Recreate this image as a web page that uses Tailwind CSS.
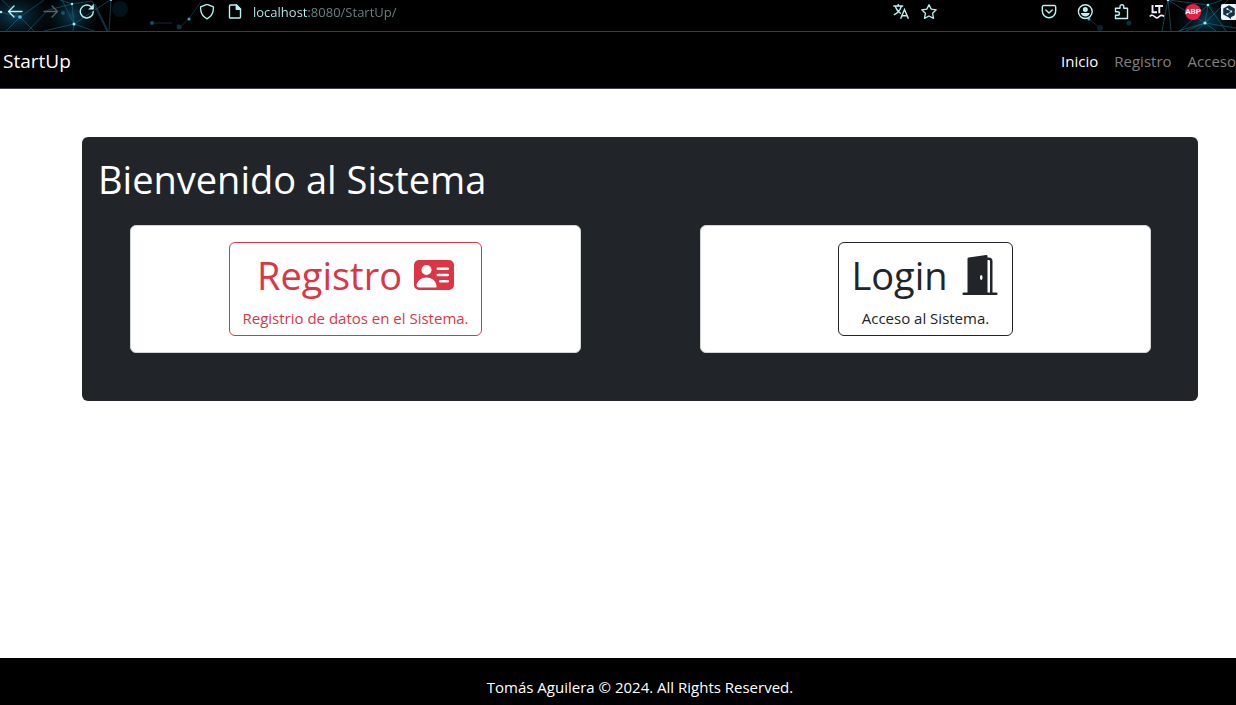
<!DOCTYPE html>
<html lang="es">
<head>
<meta charset="utf-8">
<title>StartUp</title>
<script src="https://cdn.jsdelivr.net/npm/@tailwindcss/browser@4"></script>
</head>
<body class="flex min-h-screen flex-col overflow-x-hidden bg-white text-[15px] leading-6 text-[#212529] font-['Open_Sans','Noto_Sans',sans-serif]">

<div class="relative h-8 shrink-0 overflow-hidden border-b border-[#33403f] bg-black text-[#b9f3f2]">
  <svg class="absolute top-0 left-0" width="220" height="31" viewBox="0 0 220 31" fill="none" aria-hidden="true">
    <defs>
      <radialGradient id="glow"><stop offset="0" stop-color="#0d4c66" stop-opacity=".8"/><stop offset="1" stop-color="#041a24" stop-opacity="0"/></radialGradient>
    </defs>
    <ellipse cx="14" cy="16" rx="44" ry="28" fill="url(#glow)"/>
    <ellipse cx="72" cy="16" rx="30" ry="28" fill="url(#glow)"/>
    <circle cx="120" cy="9" r="8" fill="#02131b"/>
    <path d="M0 12 20 17 44 0M20 17 6 31M20 17 2 0M20 17 34 31M74 24 72 4 60 0M74 24 62 0M74 24 44 31M74 24 94 31M74 24 73 31M74 24 110 0M72 4 92 1 107 31M72 4 48 10 28 31" stroke="#1b7391" stroke-width=".9" opacity=".6"/>
    <path d="M95 4 108 31M111 0 109 31" stroke="#24596b" stroke-width=".8" opacity=".8"/>
    <path d="M152 23H172M179 28 189 19 202 0" stroke="#0d3a4d" stroke-width=".8"/>
    <circle cx="152" cy="23" r="2" fill="#134f68"/><circle cx="179" cy="27" r="2.500" fill="#0a3444"/><circle cx="189" cy="19" r="1.500" fill="#37a4cd"/>
    <circle cx="63" cy="13" r="2" fill="#1a5268"/><circle cx="20" cy="17" r="1.800" fill="#4fc5e5"/>
    <g fill="#a5effb"><circle cx="1" cy="12" r="1.300"/><circle cx="74" cy="24" r="1.500"/><circle cx="72" cy="4" r="1.200"/><circle cx="111" cy="0" r="1"/></g>
  </svg>
  <svg class="absolute top-0 right-0" width="160" height="31" viewBox="0 0 160 31" fill="none" aria-hidden="true">
    <defs><radialGradient id="glow2"><stop offset="0" stop-color="#0d4c66" stop-opacity=".8"/><stop offset="1" stop-color="#041a24" stop-opacity="0"/></radialGradient></defs>
    <ellipse cx="130" cy="20" rx="34" ry="26" fill="url(#glow2)"/>
    <path d="M92 0 129 23 132 5 146 0M129 23 102 31M129 23 110 31M129 23 160 28M129 23 140 31M129 23 120 31M132 5 150 31M132 5 104 31M92 0 95 31M129 23 152 0M92 0 132 5M92 0 86 31" stroke="#1f7f9f" stroke-width=".8" opacity=".65"/>
    <path d="M13 19 24 28" stroke="#0c394a" stroke-width=".8"/>
    <circle cx="13" cy="19" r="1.500" fill="#37a4cd"/><circle cx="24" cy="28" r="3" fill="#06222e"/><circle cx="53" cy="23" r="2.500" fill="#0a3040"/>
    <g fill="#a5effb"><circle cx="92" cy="0" r="1.200"/><circle cx="129" cy="23" r="1.600"/><circle cx="132" cy="5" r="1.300"/></g>
  </svg>
  <div class="relative -mx-[3px] flex h-[23px] items-center">
    <button class="flex w-9 justify-center" aria-label="Atrás"><svg width="16" height="16" viewBox="0 0 16 16" fill="none" stroke="currentColor" stroke-width="1.400" stroke-linecap="round" stroke-linejoin="round"><path d="M15 7.500H1.500M7 2 1.500 7.500 7 13"/></svg></button>
    <button class="flex w-9 justify-center text-[#536266]" aria-label="Adelante"><svg width="16" height="16" viewBox="0 0 16 16" fill="none" stroke="currentColor" stroke-width="1.400" stroke-linecap="round" stroke-linejoin="round"><path d="M1 7.500h13.500M9 2 14.500 7.500 9 13"/></svg></button>
    <button class="flex w-9 justify-center" aria-label="Recargar"><svg width="16" height="16" viewBox="0 0 16 16" fill="none" stroke="currentColor" stroke-width="1.400" stroke-linecap="round"><path d="M14.300 7.700A6.500 6.500 0 1 1 12 2.500"/><path d="M14.600 .6v4.600H10z" fill="currentColor" stroke-width=".6" stroke-linejoin="round"/></svg></button>
    <form class="mx-[88px] flex min-w-0 flex-1 items-center">
      <button type="button" class="flex w-7 justify-center" aria-label="Protección"><svg width="16" height="16" viewBox="0 0 16 16" fill="none" stroke="currentColor" stroke-width="1.300" stroke-linejoin="round"><path d="M8 .3 14.400 2.800c.3 5-1.600 9.600-6.400 12C3.200 12.400 1.300 7.800 1.600 2.800z"/></svg></button>
      <button type="button" class="flex w-7 justify-center" aria-label="Información del sitio"><svg width="16" height="16" viewBox="0 0 16 16" fill="none" stroke="currentColor" stroke-width="1.400" stroke-linejoin="round"><path d="M3.500 1h6l4 4v8a1 1 0 0 1-1 1h-9a1 1 0 0 1-1-1V2a1 1 0 0 1 1-1z"/><path d="M9.300 1v4.200h4.200z" fill="currentColor"/></svg></button>
      <input aria-label="Dirección" value="localhost:8080/StartUp/" class="ml-1 h-6 min-w-0 flex-1 bg-[linear-gradient(90deg,#b9f3f2_56px,#6e8285_56px)] bg-clip-text text-[13px] text-transparent outline-none">
      <button type="button" class="flex w-7 justify-center" aria-label="Traducir"><svg width="16" height="16" viewBox="0 0 16 16" fill="none" stroke="currentColor" stroke-width="1.400"><path d="M.3 2h9.900M5.200 0v2M2.300 2.300C3.500 6 5.500 8.200 8 9.500M8.300 2.300C7.200 6.500 4.500 9.300.8 10.800M7.600 14.700 11.500 5.500l3.900 9.200M9 11.700h5"/></svg></button>
      <button type="button" class="flex w-7 justify-center" aria-label="Marcador"><svg width="16" height="16" viewBox="0 0 16 16" fill="none" stroke="currentColor" stroke-width="1.300" stroke-linejoin="round"><path d="m8 .7 2.200 4.400 5 .7-3.600 3.500.9 5L8 12l-4.500 2.300.9-5L.8 5.800l5-.7z"/></svg></button>
    </form>
    <div class="-mr-2 flex shrink-0">
      <button class="flex w-9 justify-center" aria-label="Pocket"><svg width="16" height="16" viewBox="0 0 16 16" fill="none" stroke="currentColor" stroke-width="1.400" stroke-linecap="round" stroke-linejoin="round"><path d="M2.800 1.500h10.400a1.500 1.500 0 0 1 1.500 1.500v4a6.700 6.700 0 0 1-13.400 0V3a1.500 1.500 0 0 1 1.500-1.500z"/><path d="M4.800 6 8 9l3.200-3"/></svg></button>
      <button class="flex w-9 justify-center" aria-label="Cuenta"><svg width="16" height="16" viewBox="0 0 16 16"><circle cx="8.300" cy="7.600" r="6.900" fill="none" stroke="currentColor" stroke-width="1.400"/><circle cx="8.300" cy="5.400" r="2.500" fill="currentColor"/><path d="M4.100 8.900h8.400v1c-.8 1.600-2.300 2.500-4.200 2.500s-3.400-.9-4.200-2.500z" fill="currentColor"/></svg></button>
      <button class="flex w-9 justify-center" aria-label="Extensiones"><svg width="16" height="16" viewBox="0 0 16 16" fill="none" stroke="currentColor" stroke-width="1.400" stroke-linejoin="round"><path d="M2.500 14.500V11.300h2.200a1.800 1.800 0 0 0 0-3.600H2.500V4.300h4.500V2.600a1.900 1.900 0 0 1 3.800 0v1.700h3.700v10.200z"/></svg></button>
      <button class="flex w-9 justify-center text-[#f3edff]" aria-label="LanguageTool"><svg width="16" height="16" viewBox="0 0 16 16" fill="none" stroke="currentColor" stroke-width="1.900"><path d="M3.500 1v7.300H8M6 2h8M10.300 2v7.300"/><path d="M.8 12.500c1.500-1.800 3-1.600 4.700 0 1.700 1.700 3.200 1.700 4.700 0 1.500-1.400 3-1.600 4.800 0" stroke-width="1.700"/></svg></button>
      <button class="flex w-9 justify-center" aria-label="Adblock Plus"><span class="flex size-4 items-center justify-center rounded-full bg-[#ed1e45] text-[8px] font-bold text-white font-[Roboto,sans-serif]">ABP</span></button>
      <button class="flex w-9 justify-center" aria-label="Complemento"><svg width="16" height="16" viewBox="0 0 16 16"><rect width="16" height="16" rx="2" fill="#eef7fb"/><path d="m8 1.200 5.800 3.300v6.700L10 13.300v1.900L7.500 13.300l-5.300-2.700V4.500z" fill="#12304a"/><path d="M6.300 4.800 10.300 7.500l-4 3" fill="none" stroke="#dcecf4" stroke-width=".7"/><g fill="#dcecf4"><circle cx="6.300" cy="4.900" r="1"/><circle cx="10.300" cy="7.500" r="1"/><circle cx="6.300" cy="10.300" r="1"/></g></svg></button>
    </div>
  </div>
</div>

<nav class="flex h-[57px] shrink-0 items-center justify-between border-b border-[#41464d] bg-black pt-0.5 pl-[3px] text-white">
  <a href="#" class="text-[19px]">StartUp</a>
  <div class="flex gap-4">
    <a href="#">Inicio</a>
    <a href="#" class="text-[#808080]">Registro</a>
    <a href="#" class="text-[#808080]">Acceso</a>
  </div>
</nav>

<main class="flex-1 pt-12 pr-[38px] pl-[82px]">
  <section class="rounded-md bg-[#212529] px-4 pt-4 pb-12">
    <h1 class="text-[38px] leading-[52px] text-white">Bienvenido al Sistema</h1>
    <div class="mt-5 grid grid-cols-2 gap-[119px] pr-[31px] pl-8">
      <div class="flex justify-center rounded-md border border-[#d3d4d5] bg-white p-4">
        <button class="flex flex-col items-center rounded-md border border-[#dc3545] px-3 pt-2 pb-[5px] text-[#dc3545]">
          <span class="mb-[7px] flex h-12 items-center gap-3 text-[38px] leading-[48px]">Registro
            <svg class="size-10" viewBox="0 0 16 16" fill="currentColor" aria-hidden="true"><path d="M0 4a2 2 0 0 1 2-2h12a2 2 0 0 1 2 2v8a2 2 0 0 1-2 2H2a2 2 0 0 1-2-2V4Zm9 1.500a.5.5 0 0 0 .5.5h4a.5.5 0 0 0 0-1h-4a.5.5 0 0 0-.5.5ZM9 8a.5.5 0 0 0 .5.5h4a.5.5 0 0 0 0-1h-4A.5.5 0 0 0 9 8Zm1 2.500a.5.5 0 0 0 .5.5h3a.5.5 0 0 0 0-1h-3a.5.5 0 0 0-.5.5Zm-1 2C9 10.567 7.210 9 5 9c-2.086 0-3.800 1.398-3.984 3.181A1.006 1.006 0 0 0 2 13h6.960c.026-.163.040-.330.040-.5ZM7 6a2 2 0 1 0-4 0 2 2 0 0 0 4 0Z"/></svg>
          </span>
          <span>Registrio de datos en el Sistema.</span>
        </button>
      </div>
      <div class="flex justify-center rounded-md border border-[#d3d4d5] bg-white p-4">
        <button class="flex flex-col items-center rounded-md border border-[#212529] px-3 pt-2 pb-[5px]">
          <span class="mb-[7px] flex h-12 items-center gap-3 text-[38px] leading-[48px]">Login
            <svg class="size-10" viewBox="0 0 16 16" fill="currentColor" aria-hidden="true"><path d="M1.500 15a.5.5 0 0 0 0 1h13a.5.5 0 0 0 0-1H13V2.500A1.500 1.500 0 0 0 11.500 1H11V.5a.5.5 0 0 0-.57-.495l-7 1A.5.5 0 0 0 3 1.500V15H1.500zM11 2h.5a.5.5 0 0 1 .5.5V15h-1V2zm-2.500 8c-.276 0-.5-.448-.5-1s.224-1 .5-1 .5.448.5 1-.224 1-.5 1z"/></svg>
          </span>
          <span>Acceso al Sistema.</span>
        </button>
      </div>
    </div>
  </section>
</main>

<footer class="flex h-[47px] shrink-0 items-end justify-center bg-black pb-1.5 pl-11 text-white">
  <p>Tomás Aguilera © 2024. All Rights Reserved.</p>
</footer>
</body>
</html>
